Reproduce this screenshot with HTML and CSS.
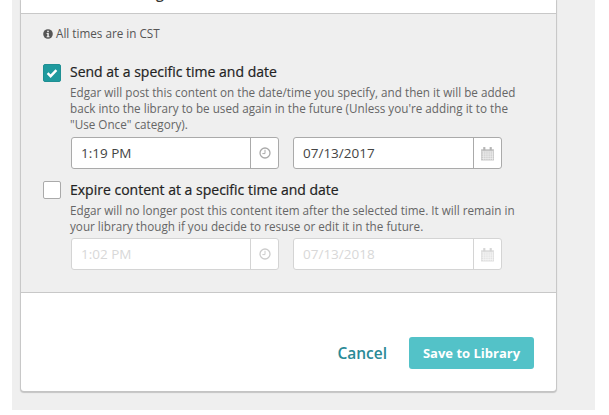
FILE: index.html
```html
<!DOCTYPE html>
<html lang="en">
<head>
<meta charset="utf-8">
<title>Schedule</title>
<link rel="stylesheet" href="styles.css">
</head>
<body>
<div class="page">
  <div class="card">
    <div class="head"><span class="head-text">Scheduling</span></div>
    <div class="section">
      <p class="note">
        <svg class="info" viewBox="0 0 10 10"><circle cx="5" cy="5" r="4.8" fill="#555"/><rect x="4.2" y="1.7" width="1.6" height="1.5" fill="#eee"/><path d="M3.6 4h2.2v3.3h.7v.9H3.600v-.9h.7V4.900h-.7z" fill="#eee"/></svg>
        All times are in CST
      </p>
      <div class="option first">
        <span class="check checked"><svg viewBox="0 0 18 18"><path d="M4.600 9.200l3 3 5.800-6" fill="none" stroke="#fff" stroke-width="2.400"/></svg></span>
        <div class="body">
          <div class="label">Send at a specific time and date</div>
          <p class="desc">Edgar will post this content on the date/time you specify, and then it will be added back into the library to be used again in the future (Unless you're adding it to the "Use Once" category).</p>
        </div>
      </div>
      <div class="fields">
        <div class="field"><span class="value">1:19 PM</span><span class="addon"><svg class="clock" viewBox="0 0 12 12"><circle cx="6" cy="6" r="5" fill="none" stroke="#aaa" stroke-width="1.300"/><path d="M6 2.800V6.600H3.400" fill="none" stroke="#aaa"/></svg></span></div>
        <div class="field date"><span class="value">07/13/2017</span><span class="addon"><svg class="cal" viewBox="0 0 14 14"><path d="M1 3h12v10.500H1z" fill="#c4c4c4"/><path d="M1.500 5.500h11M1.500 7.500h11M1.500 9.500h11M1.500 11.500h11M3.500 5v8M5.500 5v8M7.500 5v8M9.500 5v8M11.500 5v8" stroke="#f4f4f4" stroke-width=".7"/><rect x="3" y="1" width="2" height="3" fill="#b4b4b4"/><rect x="9" y="1" width="2" height="3" fill="#b4b4b4"/></svg></span></div>
      </div>
      <div class="option second">
        <span class="check"></span>
        <div class="body">
          <div class="label">Expire content at a specific time and date</div>
          <p class="desc">Edgar will no longer post this content item after the selected time. It will remain in your library though if you decide to resuse or edit it in the future.</p>
        </div>
      </div>
      <div class="fields disabled">
        <div class="field"><span class="value">1:02 PM</span><span class="addon"><svg class="clock" viewBox="0 0 12 12"><circle cx="6" cy="6" r="5" fill="none" stroke="#ccc" stroke-width="1.300"/><path d="M6 2.800V6.600H3.400" fill="none" stroke="#ccc"/></svg></span></div>
        <div class="field date"><span class="value">07/13/2018</span><span class="addon"><svg class="cal" viewBox="0 0 14 14"><path d="M1 3h12v10.500H1z" fill="#ddd"/><path d="M1.500 5.500h11M1.500 7.500h11M1.500 9.500h11M1.500 11.500h11M3.500 5v8M5.500 5v8M7.500 5v8M9.500 5v8M11.500 5v8" stroke="#f8f8f8" stroke-width=".7"/><rect x="3" y="1" width="2" height="3" fill="#d5d5d5"/><rect x="9" y="1" width="2" height="3" fill="#d5d5d5"/></svg></span></div>
      </div>
    </div>
    <div class="actions">
      <a class="cancel">Cancel</a>
      <a class="save">Save to Library</a>
    </div>
  </div>
</div>
</body>
</html>
```
FILE: styles.css
```css
* { box-sizing: border-box; }
html, body { margin: 0; height: 100%; background: #fff; overflow: hidden; }
body { font-family: "Open Sans", sans-serif; color: #333; }
.page { width: 583px; height: 410px; margin-left: 12px; background: #efefef; padding-left: 9px; }
.card { width: 535px; height: 391px; background: #fff; border-radius: 0 0 3px 3px; box-shadow: 0 1px 1px 1px rgba(0,0,0,.18); display: flex; flex-direction: column; }
.head { height: 14px; border-bottom: 1px solid #c8c8c8; overflow: hidden; padding-left: 69px; }
.head-text { display: block; font-size: 14px; font-weight: 600; line-height: 14px; margin-top: -13px; }
.section { height: 279px; background: #efefef; border-bottom: 1px solid #c8c8c8; padding: 12px 22px 0; }
.note { margin: 0; font-size: 11.7px; line-height: 15px; color: #555; display: flex; align-items: center; gap: 3px; }
.info { width: 10px; height: 10px; }
.option { display: flex; gap: 9px; }
.option.first { margin-top: 22px; }
.option.first .check { margin-top: 1px; }
.option.second { margin-top: 12px; }
.check { width: 18px; height: 18px; flex: none; border-radius: 2px; background: #fff; border: 1px solid #aaa; }
.check svg { display: block; width: 18px; height: 18px; margin: -1px; }
.check.checked { background: #1f9a9e; border-color: #1f8f93; }
.body { width: 455px; }
.label { font-size: 14px; font-weight: 400; line-height: 18px; color: #222; -webkit-text-stroke: .2px #222; }
.desc { margin: 3px 0 0; font-size: 11.7px; line-height: 16px; color: #666; }
.fields { display: flex; gap: 14px; margin: 5px 0 0 28px; }
.fields.disabled { margin-top: 4px; }
.field { width: 208px; height: 32px; display: flex; align-items: center; background: #fff; border: 1px solid #aaa; border-radius: 3px; font-size: 13.5px; color: #444; }
.field.date { width: 209px; }
.value { flex: 1; padding-left: 9px; }
.addon { width: 28px; height: 100%; flex: none; display: flex; align-items: center; justify-content: center; border-left: 1px solid #aaa; }
.clock { width: 12px; height: 12px; }
.cal { width: 15px; height: 15px; }
.fields.disabled .field { border-color: #d4d4d4; color: #d8d8d8; }
.fields.disabled .addon { border-left-color: #d4d4d4; }
.actions { flex: 1; display: flex; justify-content: flex-end; align-items: center; gap: 22px; padding: 22px 22px 0 0; }
.cancel { font-size: 15.5px; font-weight: 600; color: #2a8a96; }
.save { width: 125px; height: 32px; background: #53c2c8; border-radius: 3px; color: #fff; font-size: 13px; font-weight: 700; display: flex; align-items: center; justify-content: center; }
```
